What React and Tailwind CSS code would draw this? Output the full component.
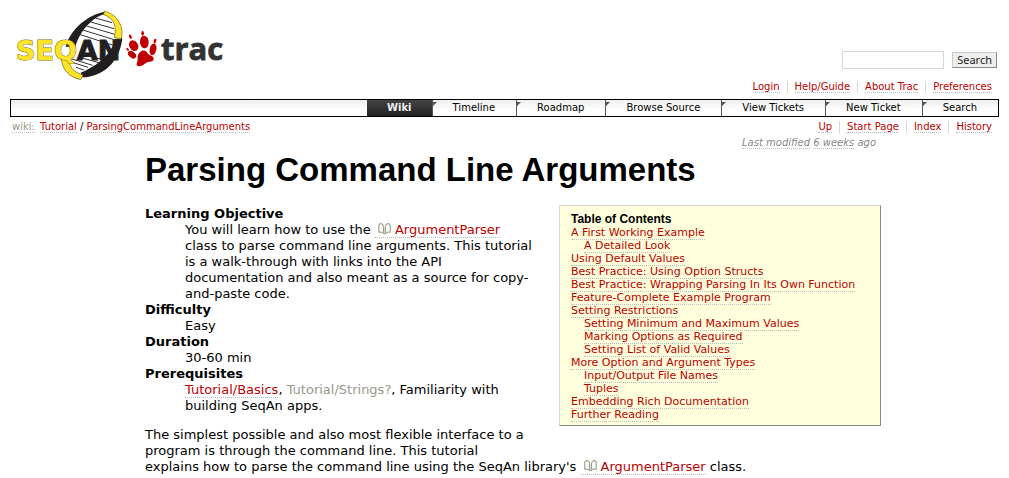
import React from "react";

const linkClass = "border-b border-dotted border-[#bbb] text-[#b00] hover:bg-[#eee]";

function Link({ children, href = "#" }) {
  return (
    <a href={href} className={linkClass}>
      {children}
    </a>
  );
}

function Logo() {
  return (
    <svg
      width="216"
      height="76"
      viewBox="8 4 216 76"
      role="img"
      aria-label="SeqAn trac"
      className="block"
    >
      <g transform="translate(60 8) scale(0.3333)" strokeLinejoin="round">
        <path
          d="M134 14C92 24 40 62 20 112L14 166L66 206C122 196 170 150 180 92L162 34Z"
          fill="#fff"
        />
        <g stroke="#333" strokeWidth="3" fill="none">
          <path d="M106 30L156 44M92 42L162 62M80 54L164 79M68 66L166 96M58 79L160 112" />
          <path d="M32 152L98 172M40 164L84 178M48 178L72 186M60 148L116 164M96 146L132 156" />
        </g>
        <path d="M134 11C84 20 32 62 17 116L46 116C54 90 66 66 90 44C103 32 118 22 136 18Z" fill="#231f20" />
        <path d="M183 88C178 144 132 190 64 199L68 208C130 206 178 162 187 92Z" fill="#231f20" />
        <path d="M166 92C160 124 130 158 94 178C84 184 74 190 62 194L68 207C128 198 176 152 184 94Z" fill="#231f20" />
        <path
          d="M133 9C160 16 178 34 185 62C187 73 186 84 183 93L163 88C168 68 166 48 156 36C149 28 141 23 131 20Z"
          fill="#fde428"
          stroke="#695d15"
          strokeWidth="2"
        />
        <path
          d="M3 150C8 188 26 206 62 215L69 201C46 194 36 184 31 172L24 150Z"
          fill="#fde428"
          stroke="#695d15"
          strokeWidth="2"
        />
      </g>
      <text
        y="60"
        fontFamily="'DejaVu Sans', Verdana, sans-serif"
        fontSize="27"
        fontWeight="700"
        strokeWidth="1"
        paintOrder="stroke"
      >
        <tspan x="16" fill="#fde428" stroke="#7a6b12">SEQ</tspan>
        <tspan fill="#231f20" stroke="#231f20">AN</tspan>
      </text>
      <g transform="translate(110 20) scale(0.3333)" fill="#c00000">
        <path d="M90 97C98 88 109 92 113 100C117 108 131 106 131 116C130 128 118 123 109 128C100 134 92 141 83 138C76 134 83 126 83 119C83 111 82 104 90 97Z" />
        <ellipse cx="103" cy="66" rx="13" ry="19" transform="rotate(-5 103 66)" />
        <ellipse cx="71" cy="77" rx="13" ry="17" transform="rotate(-30 71 77)" />
        <ellipse cx="129" cy="88" rx="10" ry="18" transform="rotate(12 129 88)" />
        <ellipse cx="66" cy="104" rx="9" ry="14" transform="rotate(-50 66 104)" />
        <ellipse cx="98" cy="40" rx="4" ry="7" />
        <ellipse cx="61" cy="50" rx="4" ry="7" transform="rotate(-20 61 50)" />
        <ellipse cx="135" cy="63" rx="4" ry="7" transform="rotate(15 135 63)" />
        <ellipse cx="53" cy="88" rx="3" ry="5" transform="rotate(-40 53 88)" />
      </g>
      <text
        x="161"
        y="60"
        fill="#333"
        stroke="#333"
        strokeWidth="0.8"
        fontFamily="'Open Sans', 'Noto Sans', sans-serif"
        fontSize="31"
        fontWeight="700"
      >
        trac
      </text>
    </svg>
  );
}

function BookIcon() {
  return (
    <svg
      width="13"
      height="12"
      viewBox="0 0 13 12"
      fill="none"
      stroke="#a4a48c"
      strokeWidth="1.2"
      aria-hidden="true"
      className="mr-1 ml-[3px] inline-block align-[-1px]"
    >
      <path d="M.8 1.600V9.200H2.800C4.300 9.200 5.300 9.600 5.800 10.600H7.200C7.700 9.600 8.700 9.200 10.200 9.200H12.200V1.600" />
      <path d="M.8 1.600C1.800 .7 3.600 .6 4.500 1.400C5.200 2 5.600 3 5.600 4.400V10M12.200 1.600C11.200 .7 9.400 .6 8.500 1.400C7.800 2 7.400 3 7.400 4.400V10" />
    </svg>
  );
}

function ApiLink({ children }) {
  return (
    <a href="#" className={linkClass}>
      <BookIcon />
      {children}
    </a>
  );
}

function LinkBar({ items, label }) {
  return (
    <nav aria-label={label}>
      <ul className="flex justify-end text-[10px] leading-3">
        {items.map((item) => (
          <li
            key={item}
            className="border-l border-[#d7d7d7] px-[7px] first:border-l-0"
          >
            <Link>{item}</Link>
          </li>
        ))}
      </ul>
    </nav>
  );
}

const tabs = [
  "Timeline",
  "Roadmap",
  "Browse Source",
  "View Tickets",
  "New Ticket",
  "Search",
];

const contents = [
  ["A First Working Example", ["A Detailed Look"]],
  ["Using Default Values", []],
  ["Best Practice: Using Option Structs", []],
  ["Best Practice: Wrapping Parsing In Its Own Function", []],
  ["Feature-Complete Example Program", []],
  [
    "Setting Restrictions",
    [
      "Setting Minimum and Maximum Values",
      "Marking Options as Required",
      "Setting List of Valid Values",
    ],
  ],
  ["More Option and Argument Types", ["Input/Output File Names", "Tuples"]],
  ["Embedding Rich Documentation", []],
  ["Further Reading", []],
];

function TableOfContents() {
  return (
    <nav
      aria-labelledby="toc-title"
      className="float-right mb-4 ml-4 w-[322px] border border-t-[#d7d7d7] border-r-[#888] border-b-[#888] border-l-[#d7d7d7] bg-[#ffffdd] px-[11px] pt-[6px] pb-1 text-[11px] leading-[13px] whitespace-nowrap"
    >
      <h2
        id="toc-title"
        className="font-['Liberation_Sans',Arial,sans-serif] text-xs leading-[14px] font-bold"
      >
        Table of Contents
      </h2>
      <ol>
        {contents.map(([title, children]) => (
          <li key={title}>
            <Link>{title}</Link>
            {children.length > 0 && (
              <ol className="pl-[13px]">
                {children.map((child) => (
                  <li key={child}>
                    <Link>{child}</Link>
                  </li>
                ))}
              </ol>
            )}
          </li>
        ))}
      </ol>
    </nav>
  );
}

export default function App() {
  return (
    <div className="bg-white px-2.5 font-['DejaVu_Sans',Verdana,sans-serif] text-[13px] leading-4 text-black">
      <header>
        <div className="flex items-end justify-between pt-1">
          <a href="#" className="-ml-0.5">
            <Logo />
          </a>
          <form className="mb-[11px] flex items-center gap-2 pr-0.5">
            <input
              type="text"
              aria-label="Search the site"
              className="h-[18px] w-[102px] border border-[#d7d7d7] bg-white px-1 text-[11px] outline-none"
            />
            <button
              type="button"
              className="h-4 border border-t-[#ccc] border-r-[#888] border-b-[#888] border-l-[#ccc] bg-[#eee] px-1 font-['Noto_Sans',sans-serif] text-[11px] leading-[14px] text-[#222]"
            >
              Search
            </button>
          </form>
        </div>
        <div className="pt-px">
          <LinkBar
            label="Account"
            items={["Login", "Help/Guide", "About Trac", "Preferences"]}
          />
        </div>
        <nav
          aria-label="Main"
          className="mt-[6px] border border-black bg-linear-to-b from-[#eee] to-white to-60%"
        >
          <ul className="flex justify-end text-[10px] leading-4">
            <li className="bg-linear-to-b from-[#444] to-[#222] px-5 font-bold text-[#eee]">
              <a href="#">Wiki</a>
            </li>
            {tabs.map((tab) => (
              <li
                key={tab}
                className="relative border-l border-[#555] pr-[21px] pl-5"
              >
                <span className="absolute top-0.5 left-0 size-0 border-t-4 border-r-4 border-t-[#555] border-r-transparent" />
                <a href="#">{tab}</a>
              </li>
            ))}
          </ul>
        </nav>
      </header>

      <div className="mt-1 flex justify-between text-[10px] leading-3">
        <nav aria-label="Path" className="pl-0.5">
          <a
            href="#"
            className="mr-0.5 border-b border-dotted border-[#bbb] text-[#999988]"
          >
            wiki:
          </a>{" "}
          <Link>Tutorial</Link> / <Link>ParsingCommandLineArguments</Link>
        </nav>
        <LinkBar
          label="Page"
          items={["Up", "Start Page", "Index", "History"]}
        />
      </div>

      <main className="pr-[118px] pl-[135px]">
        <p className="mt-1 pr-[5px] text-right text-[10px] leading-3 text-[#888] italic">
          <a href="#" className="border-b border-dotted border-[#bbb]">
            Last modified
          </a>{" "}
          <a href="#" className="border-b border-dotted border-[#bbb]">
            6 weeks
          </a>{" "}
          ago
        </p>
        <h1 className="mt-px mb-[15px] font-['Liberation_Sans',Arial,sans-serif] text-[33px] leading-10 font-bold">
          Parsing Command Line Arguments
        </h1>
        <TableOfContents />
        <dl className="pt-px [&>dd]:ml-10 [&>dt]:font-bold">
          <dt>Learning Objective</dt>
          <dd>
            You will learn how to use the <ApiLink>ArgumentParser</ApiLink>
            <br />
            class to parse command line arguments. This tutorial
            is a walk-through with links into the API
            documentation and also meant as a source for copy-and-paste code.
          </dd>
          <dt>Difficulty</dt>
          <dd>Easy</dd>
          <dt>Duration</dt>
          <dd>30-60 min</dd>
          <dt>Prerequisites</dt>
          <dd>
            <Link>Tutorial/Basics</Link>,{" "}
            <a href="#" className="text-[#999988]">
              Tutorial/Strings?
            </a>
            , Familiarity with
            <br />
            building SeqAn apps.
          </dd>
        </dl>
        <p className="mt-[13px]">
          The simplest possible and also most flexible interface to a program
          is through the command line. This tutorial
          <br />
          explains how to parse the command line using the SeqAn library's{" "}
          <ApiLink>ArgumentParser</ApiLink> class.
        </p>
      </main>
    </div>
  );
}
